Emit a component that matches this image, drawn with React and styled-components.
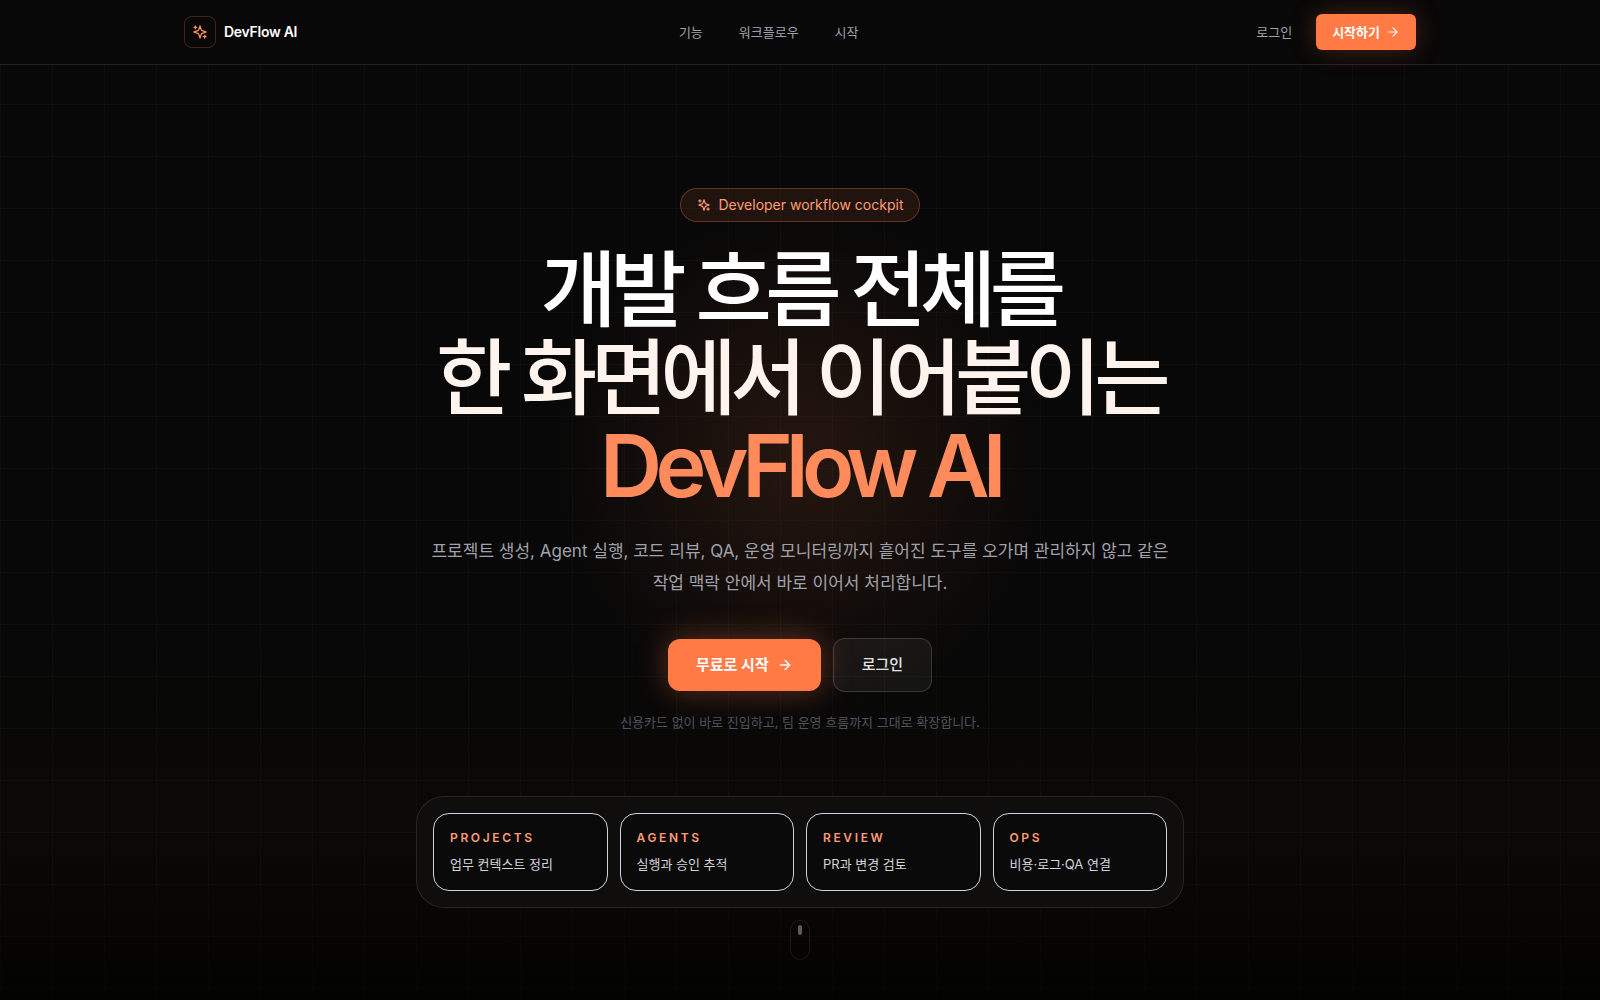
import React from "react"
import styled, { createGlobalStyle } from "styled-components"
import { ArrowRight } from "lucide-react"

const GlobalStyle = createGlobalStyle`
    *, *::before, *::after {
        box-sizing: border-box;
    }
    body {
        margin: 0;
        background: #080808;
        color: #ffffff;
        font-family: Inter, "Noto Sans CJK KR", sans-serif;
        line-height: 20px;
        word-break: keep-all;
    }
    a {
        color: inherit;
        text-decoration: none;
    }
    button {
        font-family: inherit;
        line-height: inherit;
        cursor: pointer;
    }
`

const Page = styled.div`
    display: flex;
    flex-direction: column;
    min-height: 100vh;
    background:
        linear-gradient(to bottom, transparent 84%, rgba(0, 0, 0, 0.75) 100%),
        radial-gradient(circle 250px at 50% 46%, rgba(255, 122, 69, 0.12), transparent 100%),
        linear-gradient(rgba(255, 255, 255, 0.022) 1px, transparent 1px) 0 0 / 52px 52px,
        linear-gradient(90deg, rgba(255, 255, 255, 0.022) 1px, transparent 1px) 0 0 / 52px 52px,
        linear-gradient(to bottom, #080808 60%, #0b0907 100%);
`

const Header = styled.header`
    border-bottom: 1px solid #222222;
    background: #080808;
`

const HeaderInner = styled.div`
    display: flex;
    align-items: center;
    justify-content: space-between;
    max-width: 1280px;
    height: 64px;
    margin: 0 auto;
    padding: 0 24px;
`

const Brand = styled.a`
    display: flex;
    align-items: center;
    gap: 8px;
    font-size: 14px;
    font-weight: 600;
    letter-spacing: -0.02em;
`

const BrandMark = styled.span`
    display: flex;
    align-items: center;
    justify-content: center;
    width: 32px;
    height: 32px;
    border: 1px solid rgba(255, 122, 69, 0.25);
    border-radius: 8px;
    color: #ff8a5b;
`

const Nav = styled.nav`
    display: flex;
    gap: 36px;
    color: #a1a1aa;
    font-size: 13px;
`

const Actions = styled.div`
    display: flex;
    align-items: center;
    gap: 8px;
`

const LoginLink = styled.a`
    padding: 0 16px;
    color: #a1a1aa;
    font-size: 13px;
`

const Button = styled.button`
    display: inline-flex;
    align-items: center;
    justify-content: center;
    gap: ${props => (props.$large ? "8px" : "6px")};
    height: ${props => (props.$large ? "52px" : "36px")};
    padding: ${props => (props.$large ? "0 28px" : "0 16px")};
    border: none;
    border-radius: ${props => (props.$large ? "12px" : "6px")};
    background: #ff7a45;
    box-shadow: ${props => (props.$large ? "0 0 32px rgba(255, 122, 69, 0.35)" : "0 0 24px rgba(255, 122, 69, 0.25)")};
    color: #ffffff;
    font-size: ${props => (props.$large ? "15px" : "13px")};
    font-weight: 600;
`

const OutlineButton = styled(Button)`
    height: 54px;
    border: 1px solid rgba(255, 255, 255, 0.15);
    background: rgba(255, 255, 255, 0.05);
    box-shadow: none;
    color: #e4e4e7;
    font-weight: 500;
`

const Hero = styled.main`
    display: flex;
    flex-direction: column;
    align-items: center;
    padding: 123px 24px 40px;
    text-align: center;
`

const Pill = styled.div`
    display: flex;
    align-items: center;
    gap: 8px;
    height: 34px;
    padding: 0 16px;
    border: 1px solid rgba(255, 122, 69, 0.3);
    border-radius: 17px;
    background: rgba(255, 122, 69, 0.1);
    color: #ff9b73;
    font-size: 14px;
`

const Title = styled.h1`
    margin: 24px 0 0;
    font-size: 83px;
    font-weight: 500;
    line-height: 88px;
    letter-spacing: -0.08em;
`

const TitleLine = styled.span`
    display: block;
    color: ${props => props.$color};
`

const TitleBrand = styled(TitleLine)`
    font-size: 86px;
    font-weight: 600;
`

const Lead = styled.p`
    max-width: 768px;
    margin: 25px 0 0;
    color: #a1a1aa;
    font-size: 17px;
    line-height: 32px;
`

const ButtonRow = styled.div`
    display: flex;
    align-items: center;
    gap: 12px;
    margin-top: 39px;
`

const Note = styled.p`
    margin: 20px 0 0;
    color: #52525b;
    font-size: 13px;
`

const Panel = styled.ul`
    display: grid;
    grid-template-columns: repeat(4, 1fr);
    gap: 12px;
    width: 100%;
    max-width: 768px;
    margin: 64px 0 0;
    padding: 16px;
    border: 1px solid rgba(255, 255, 255, 0.1);
    border-radius: 28px;
    background: #0f0e0d;
    list-style: none;
    text-align: left;
`

const Card = styled.li`
    padding: 16px;
    border: 1px solid #cbd5e1;
    border-radius: 16px;
    background: #0a0a0b;
`

const CardLabel = styled.div`
    color: #ff9b73;
    font-size: 12px;
    font-weight: 600;
    line-height: 16px;
    letter-spacing: 0.22em;
`

const CardText = styled.div`
    margin-top: 8px;
    color: #d4d4d8;
    font-size: 13px;
`

const ScrollHint = styled.div`
    display: flex;
    justify-content: center;
    width: 20px;
    height: 40px;
    margin-top: 12px;
    padding-top: 4px;
    border: 1px solid rgba(255, 255, 255, 0.08);
    border-radius: 10px;
`

const ScrollDot = styled.span`
    width: 4px;
    height: 10px;
    border-radius: 2px;
    background: #5c5c5c;
`

const SparklesIcon = ({ size }) => (
    <svg width={size} height={size} viewBox="0 0 24 24" fill="none" stroke="currentColor" strokeWidth="2" strokeLinecap="round" strokeLinejoin="round" aria-hidden="true">
        <path d="m12 3-1.912 5.813a2 2 0 0 1-1.275 1.275L3 12l5.813 1.912a2 2 0 0 1 1.275 1.275L12 21l1.912-5.813a2 2 0 0 1 1.275-1.275L21 12l-5.813-1.912a2 2 0 0 1-1.275-1.275L12 3Z" />
        <path d="M5 3v4" />
        <path d="M19 17v4" />
        <path d="M3 5h4" />
        <path d="M17 19h4" />
    </svg>
)

const cards = [
    { label: "PROJECTS", text: "업무 컨텍스트 정리" },
    { label: "AGENTS", text: "실행과 승인 추적" },
    { label: "REVIEW", text: "PR과 변경 검토" },
    { label: "OPS", text: "비용·로그·QA 연결" },
]

const App = () => {
    return (
        <Page>
            <GlobalStyle />
            <Header>
                <HeaderInner>
                    <Brand href="#">
                        <BrandMark><SparklesIcon size={16} /></BrandMark>
                        DevFlow AI
                    </Brand>
                    <Nav>
                        <a href="#features">기능</a>
                        <a href="#workflow">워크플로우</a>
                        <a href="#start">시작</a>
                    </Nav>
                    <Actions>
                        <LoginLink href="#login">로그인</LoginLink>
                        <Button>시작하기<ArrowRight size={14} /></Button>
                    </Actions>
                </HeaderInner>
            </Header>
            <Hero>
                <Pill><SparklesIcon size={14} />Developer workflow cockpit</Pill>
                <Title>
                    <TitleLine $color="#ffffff">개발 흐름 전체를</TitleLine>
                    <TitleLine $color="#fff3ed">한 화면에서 이어붙이는</TitleLine>
                    <TitleBrand $color="#ff8a5b">DevFlow AI</TitleBrand>
                </Title>
                <Lead>
                    프로젝트 생성, Agent 실행, 코드 리뷰, QA, 운영 모니터링까지 흩어진 도구를 오가며 관리하지 않고 같은 작업 맥락 안에서 바로 이어서 처리합니다.
                </Lead>
                <ButtonRow>
                    <Button $large>무료로 시작<ArrowRight size={16} /></Button>
                    <OutlineButton $large>로그인</OutlineButton>
                </ButtonRow>
                <Note>신용카드 없이 바로 진입하고, 팀 운영 흐름까지 그대로 확장합니다.</Note>
                <Panel>
                    {cards.map(card => (
                        <Card key={card.label}>
                            <CardLabel>{card.label}</CardLabel>
                            <CardText>{card.text}</CardText>
                        </Card>
                    ))}
                </Panel>
                <ScrollHint><ScrollDot /></ScrollHint>
            </Hero>
        </Page>
    )
}

export default App
